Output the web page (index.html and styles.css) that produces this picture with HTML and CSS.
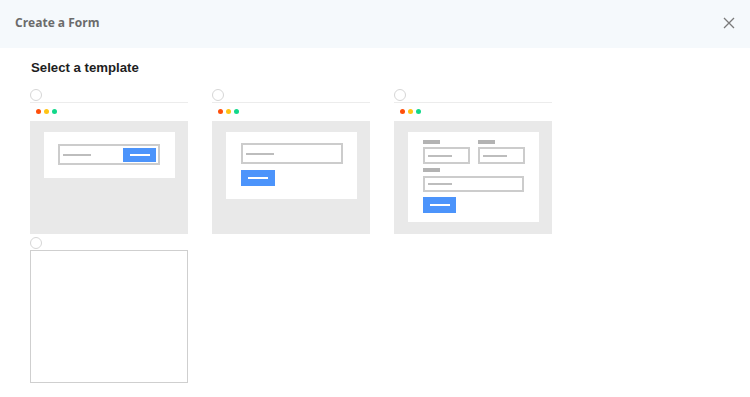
FILE: index.html
```html
<!DOCTYPE html>
<html>
<head>
<meta charset="utf-8">
<link rel="stylesheet" href="styles.css">
</head>
<body>
<header class="header">
  <div class="title">Create a Form</div>
  <svg class="close" width="12" height="12" viewBox="0 0 12 12"><path d="M1 1L11 11M11 1L1 11" stroke="#7a7a7a" stroke-width="1.3" fill="none"/></svg>
</header>
<main class="content">
  <h2 class="heading">Select a template</h2>
  <div class="grid">
    <div class="card">
      <span class="radio"></span>
      <div class="bar"><i class="dot red"></i><i class="dot yellow"></i><i class="dot green"></i></div>
      <div class="stage">
        <div class="sheet sheet-inline">
          <div class="input input-inline"><span class="txt"></span><span class="btn btn-small"><span class="btxt"></span></span></div>
        </div>
      </div>
    </div>
    <div class="card">
      <span class="radio"></span>
      <div class="bar"><i class="dot red"></i><i class="dot yellow"></i><i class="dot green"></i></div>
      <div class="stage">
        <div class="sheet sheet-stack">
          <div class="input input-wide"><span class="txt"></span></div>
          <span class="btn"><span class="btxt"></span></span>
        </div>
      </div>
    </div>
    <div class="card">
      <span class="radio"></span>
      <div class="bar"><i class="dot red"></i><i class="dot yellow"></i><i class="dot green"></i></div>
      <div class="stage">
        <div class="sheet sheet-form">
          <div class="row">
            <div class="field"><span class="label"></span><div class="input input-half"><span class="txt"></span></div></div>
            <div class="field"><span class="label"></span><div class="input input-half"><span class="txt"></span></div></div>
          </div>
          <div class="field"><span class="label"></span><div class="input input-full"><span class="txt"></span></div></div>
          <span class="btn btn-form"><span class="btxt"></span></span>
        </div>
      </div>
    </div>
    <div class="card card-blank">
      <span class="radio"></span>
      <div class="blank"></div>
    </div>
  </div>
</main>
</body>
</html>
```

FILE: styles.css
```css
* { box-sizing: border-box; }
body { margin: 0; background: #fff; font-family: "Liberation Sans", Arial, sans-serif; }

.header {
  height: 48px;
  background: #f5f9fc;
  display: flex;
  align-items: center;
  justify-content: space-between;
  padding: 0 15px 4px 15px;
}
.title {
  font-family: "Open Sans", "Liberation Sans", sans-serif;
  font-weight: 700;
  font-size: 12px;
  color: #6b6b6b;
}
.close { margin-top: 1px; }

.content { padding: 10px 0 0 30px; }
.heading {
  margin: 0;
  font-size: 13.2px;
  line-height: 20px;
  font-weight: 700;
  color: #1e1e1e;
  padding-left: 1px;
}
.grid {
  margin-top: 11px;
  display: grid;
  grid-template-columns: repeat(3, 158px);
  column-gap: 24px;
  row-gap: 3px;
  align-items: start;
}
.card { display: flex; flex-direction: column; }
.radio {
  width: 12px; height: 12px;
  border: 1px solid #d6d6d6;
  border-radius: 50%;
  background: #fff;
  margin-bottom: 1px;
}
.bar {
  border-top: 1px solid #ececec;
  height: 19px;
  display: flex;
  align-items: center;
  gap: 3px;
  padding-left: 6px;
  padding-bottom: 1px;
}
.dot { width: 5px; height: 5px; border-radius: 50%; display: block; }
.red { background: #ff4f0a; }
.yellow { background: #ffc414; }
.green { background: #12d88a; }

.stage {
  background: #e9e9e9;
  height: 113px;
  padding-top: 11px;
  padding-left: 14px;
}
.sheet { background: #fff; width: 131px; }
.sheet-inline { height: 46px; padding: 12px 0 0 14px; }
.sheet-stack { height: 67px; padding: 11px 0 0 15px; display: flex; flex-direction: column; align-items: flex-start; }
.sheet-form { height: 90px; padding: 8px 0 0 15px; display: flex; flex-direction: column; align-items: flex-start; }

.input {
  border: 2px solid #cccccc;
  background: #fff;
  display: flex;
  align-items: center;
  padding-left: 3px;
}
.txt { display: block; width: 28px; height: 2px; background: #bdbdbd; }
.input-inline { width: 102px; height: 21px; justify-content: space-between; padding-right: 2px; }
.input-wide { width: 102px; height: 21px; }
.input-half { width: 47px; height: 17px; }
.input-half .txt { width: 24px; }
.input-full { width: 101px; height: 16px; }
.input-full .txt { width: 24px; }

.btn {
  display: flex;
  align-items: center;
  justify-content: center;
  background: #4c94fb;
  width: 34px;
  height: 16px;
  margin-top: 6px;
}
.btn-small { width: 33px; height: 14px; margin-top: 0; }
.btn-form { width: 33px; height: 16px; margin-top: 5px; }
.btxt { display: block; width: 20px; height: 2px; background: #fff; }

.row { display: flex; gap: 8px; }
.field { display: flex; flex-direction: column; align-items: flex-start; }
.row + .field { margin-top: 4px; }
.label { display: block; width: 17px; height: 4px; background: #b3b3b3; margin-bottom: 3px; }
.row + .field .label { margin-bottom: 4px; }

.blank {
  height: 133px;
  border: 1px solid #cfcfcf;
  background: #fff;
}
```
